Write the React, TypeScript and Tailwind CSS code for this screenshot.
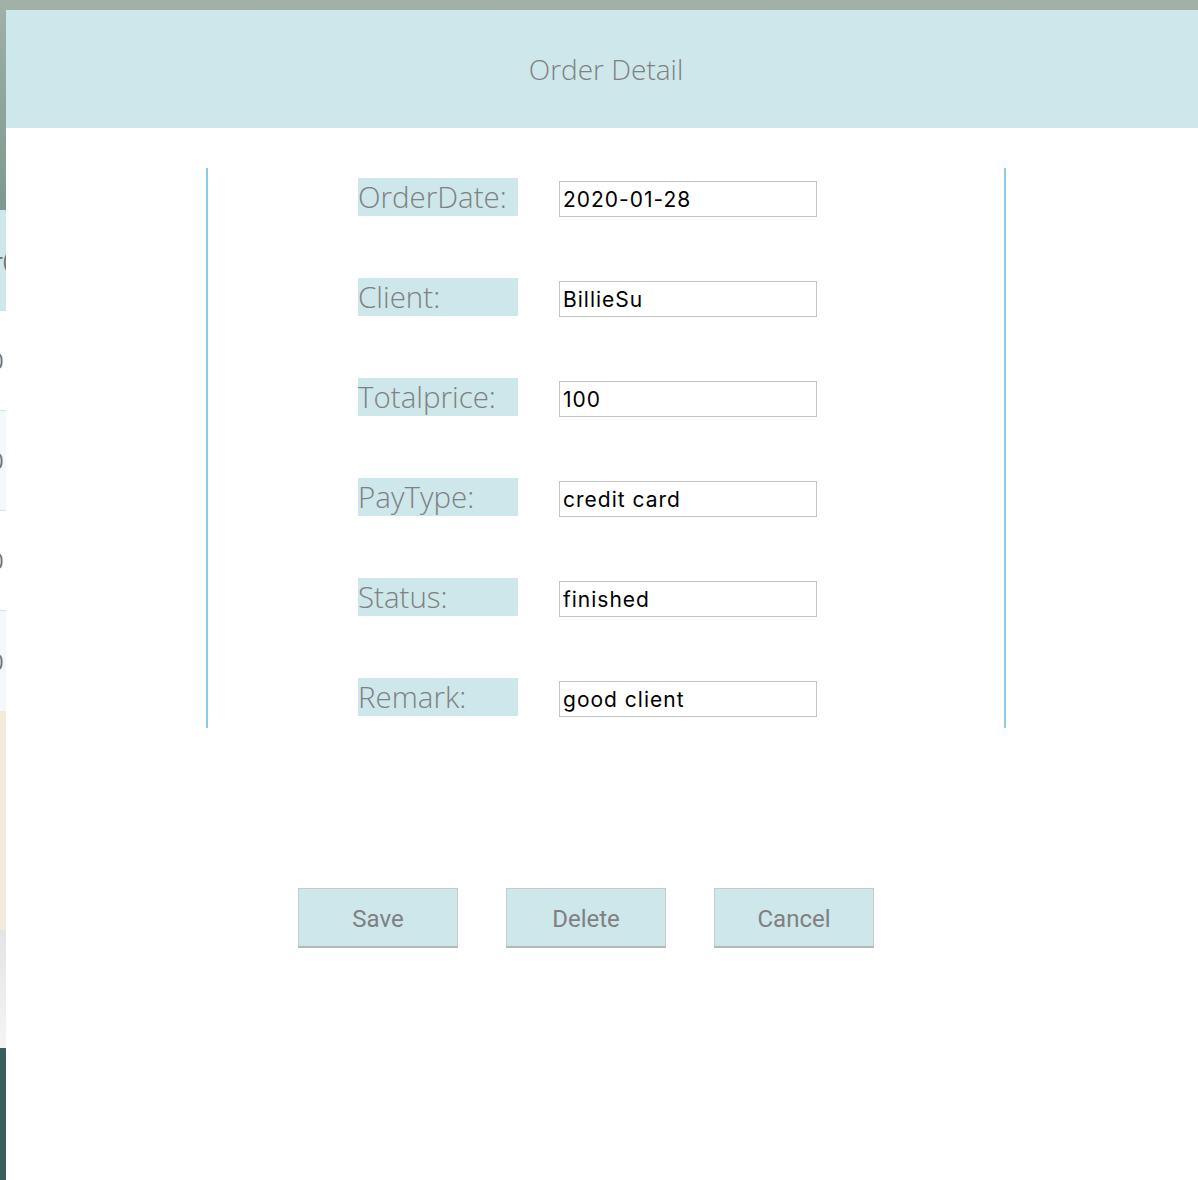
import React from 'react';

const fields = [
  { label: 'OrderDate:', value: '2020-01-28' },
  { label: 'Client:', value: 'BillieSu' },
  { label: 'Totalprice:', value: '100' },
  { label: 'PayType:', value: 'credit card' },
  { label: 'Status:', value: 'finished' },
  { label: 'Remark:', value: 'good client' },
];

function BackgroundPage() {
  // only a thin strip of the page under the dialog is visible
  return (
    <div className="flex h-full w-full flex-col font-['Open_Sans',sans-serif] text-[22px] text-[#707070]">
      <div className="h-[210px] bg-gradient-to-b from-[#a1b1a7] to-[#7c998d]" />
      <div className="flex h-[101px] items-center bg-[#cde7ea]">
        <span className="-ml-[6px]">r(</span>
      </div>
      <div className="flex h-[100px] items-center border-b border-[#d3e4ec] bg-white">
        <span className="-ml-[9px]">0</span>
      </div>
      <div className="flex h-[100px] items-center border-b border-[#d3e4ec] bg-[#f3f9fa]">
        <span className="-ml-[9px]">0</span>
      </div>
      <div className="flex h-[100px] items-center border-b border-[#d3e4ec] bg-white">
        <span className="-ml-[9px]">0</span>
      </div>
      <div className="flex h-[100px] items-center bg-[#f3f9fa]">
        <span className="-ml-[9px]">0</span>
      </div>
      <div className="h-[219px] bg-[#f2eadb]" />
      <div className="h-[118px] bg-gradient-to-b from-[#e4e4e4] to-[#f4f4f4]" />
      <div className="flex-1 bg-[#3a5f5b]" />
    </div>
  );
}

export default function App() {
  return (
    <div className="relative h-[1180px] w-[1198px] overflow-hidden">
      <BackgroundPage />

      {/* Order detail dialog */}
      <div className="absolute left-[6px] top-[10px] h-[1200px] w-[1200px] bg-white">
        <div className="flex h-[118px] items-center justify-center bg-[#cde7ea]">
          <h2 className="font-['Open_Sans',sans-serif] text-[28px] font-light text-[#808080]">Order Detail</h2>
        </div>

        <div className="pt-[40px]">
          <div className="mx-auto flex w-[800px] flex-col gap-[62px] border-x-2 border-[#87cdea] pb-[12px] pt-[10px]">
            {fields.map((f) => (
              <div key={f.label} className="flex h-[38px] items-start pl-[150px]">
                <div className="flex h-[38px] w-[160px] items-center bg-[#cde7ea] font-['Open_Sans',sans-serif] text-[29.5px] font-light leading-none text-[#808080]">
                  {f.label}
                </div>
                <input
                  readOnly
                  value={f.value}
                  className="ml-[41px] mt-[3px] h-[36px] w-[258px] shrink-0 border border-[#c4c4c4] px-[3px] font-['Inter',sans-serif] text-[21px] tracking-[1px] text-black outline-none"
                />
              </div>
            ))}
          </div>

          <div className="ml-[292px] mt-[160px] flex gap-[48px]">
            {['Save', 'Delete', 'Cancel'].map((b) => (
              <button
                key={b}
                className="h-[60px] w-[160px] border border-b-2 border-[#c9c9c9] border-b-[#b6b6b6] bg-[#cde7ea] pt-[3px] font-['Roboto',sans-serif] text-[24px] text-[#808080]"
              >
                {b}
              </button>
            ))}
          </div>
        </div>
      </div>
    </div>
  );
}
